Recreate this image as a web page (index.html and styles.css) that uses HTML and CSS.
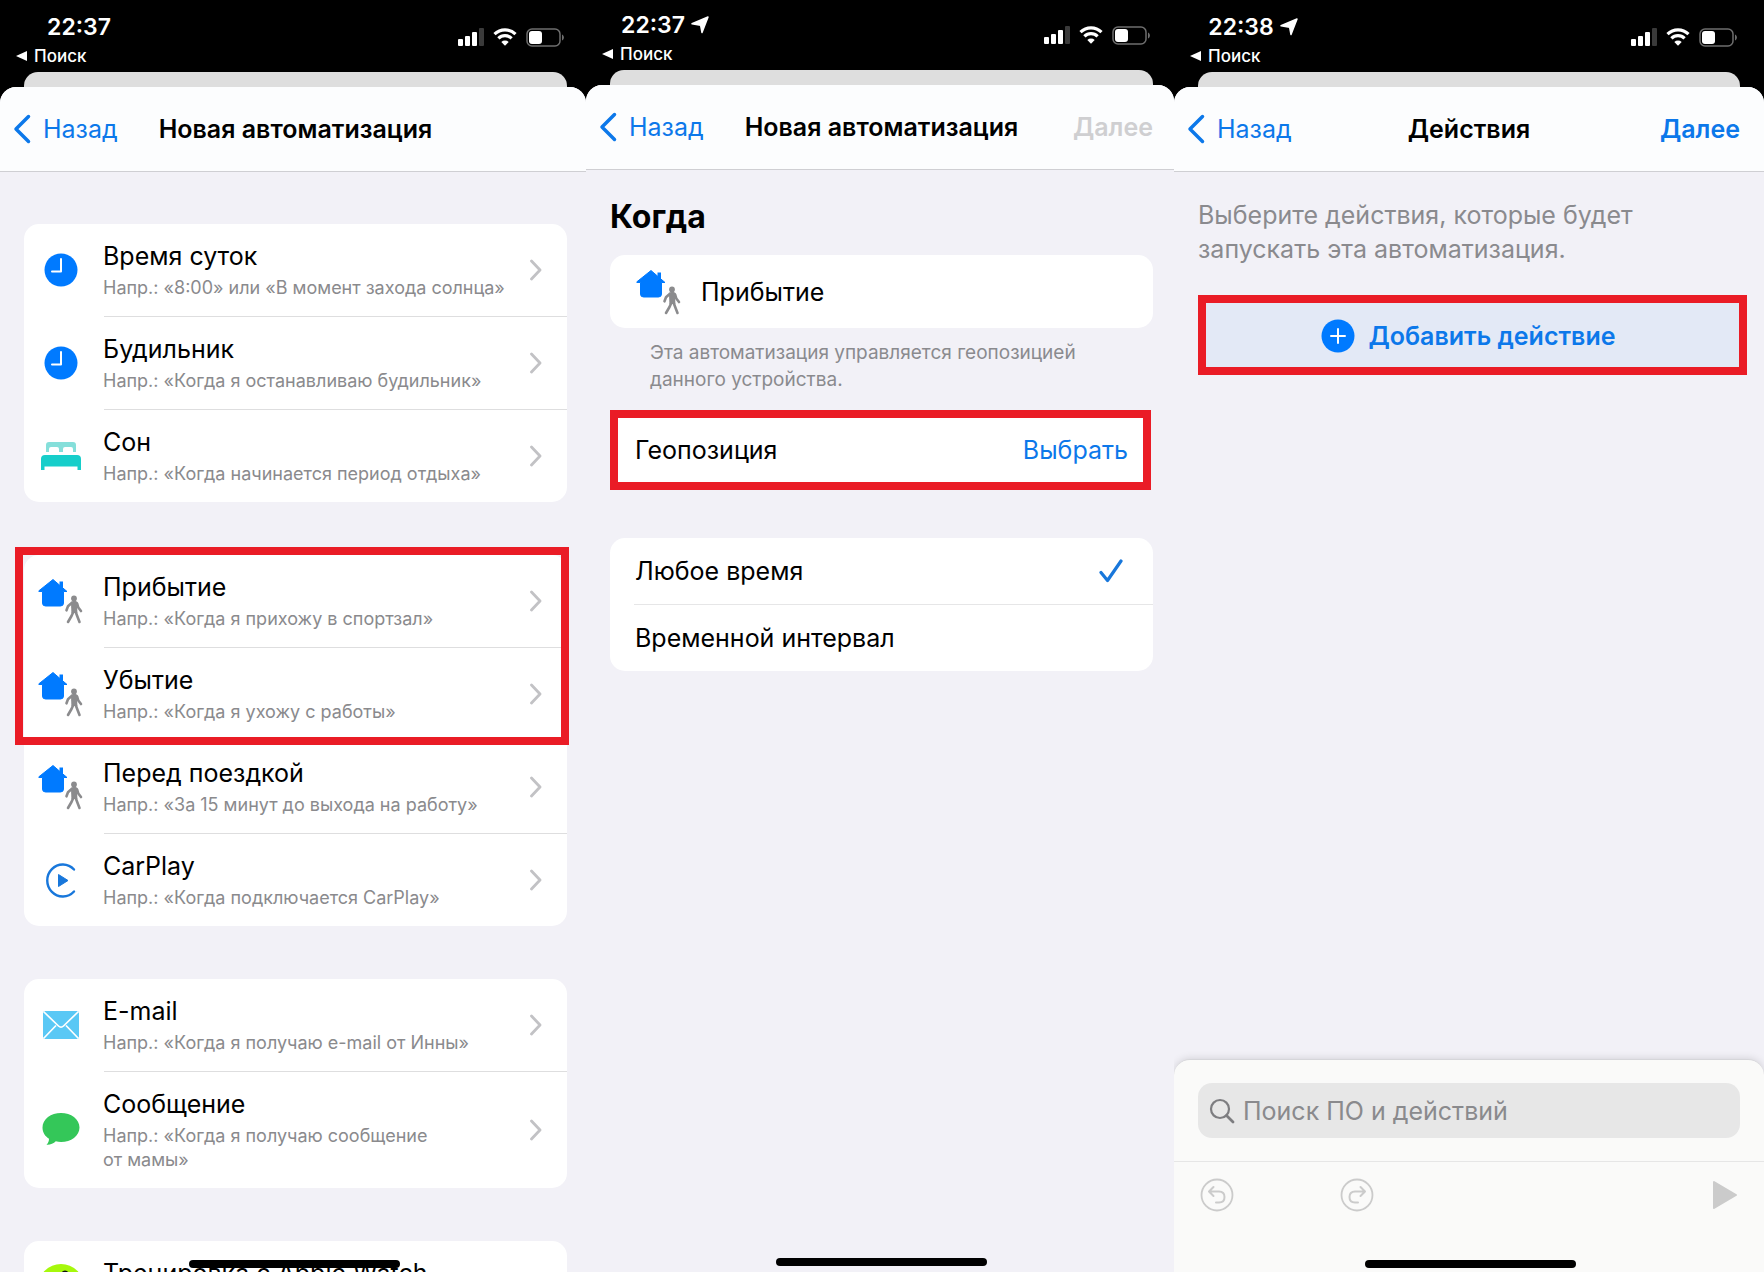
FILE: index.html
```html
<!DOCTYPE html>
<html lang="ru">

<head>
    <meta charset="UTF-8">
    <meta name="viewport" content="width=device-width, initial-scale=1.0">
    <title>Новая автоматизация</title>
    <link rel="stylesheet" href="styles.css">
</head>

<body>
    <svg class="sprite" aria-hidden="true">
        <symbol id="signal" viewBox="0 0 26 18">
            <rect x="0" y="11" width="5" height="7" rx="1" fill="#fff"/>
            <rect x="7" y="8" width="5" height="10" rx="1" fill="#fff"/>
            <rect x="14" y="4" width="5" height="14" rx="1" fill="#fff"/>
            <rect x="21" y="0" width="5" height="18" rx="1" fill="#3a3a3a"/>
        </symbol>
        <symbol id="wifi" viewBox="0 0 24 18">
            <path d="M1.5 6.2a15 15 0 0 1 21 0M5.4 10.3a9.4 9.4 0 0 1 13.2 0" fill="none" stroke="#fff" stroke-width="3.2"/>
            <path d="M12 17.8l-3.7-3.9a5.4 5.4 0 0 1 7.4 0z" fill="#fff"/>
        </symbol>
        <symbol id="battery" viewBox="0 0 38 19">
            <rect x="1" y="1" width="33" height="17" rx="5" fill="none" stroke="#6e6e6e" stroke-width="1.5"/>
            <rect x="3" y="3" width="13" height="13" rx="3" fill="#fff"/>
            <path d="M36 6.5c2.5 1 2.5 5 0 6z" fill="#6e6e6e"/>
        </symbol>
        <symbol id="location" viewBox="0 0 18 18">
            <path d="M17 1L11 16.5 9.6 9.2 1 7.8z" fill="#fff" stroke="#fff" stroke-width="1.5" stroke-linejoin="round"/>
        </symbol>
        <symbol id="back" viewBox="0 0 18 30">
            <path d="M15.5 2.5L3 15l12.5 12.5" fill="none" stroke="currentColor" stroke-width="3.5" stroke-linecap="round" stroke-linejoin="round"/>
        </symbol>
        <symbol id="chevron" viewBox="0 0 12 22">
            <path d="M1.5 2l8.5 9-8.5 9" fill="none" stroke="#c2c2c5" stroke-width="2.8" stroke-linecap="round" stroke-linejoin="round"/>
        </symbol>
        <symbol id="clock" viewBox="0 0 46 46">
            <circle cx="23" cy="23" r="16.5" fill="#007aff"/>
            <path d="M23 12v12.5h-9" fill="none" stroke="#fff" stroke-width="2" stroke-linecap="round" stroke-linejoin="round"/>
        </symbol>
        <symbol id="bed" viewBox="0 0 46 46">
            <path d="M8 19v-7q0-3 3-3h24q3 0 3 3v7h-3v-3q0-2-2-2h-6q-2 0-2 2v3h-4v-3q0-2-2-2h-6q-2 0-2 2v3z" fill="#85dfda"/>
            <path d="M3 37V26q0-4 4-4h32q4 0 4 4v11h-3.500v-3.500h-33V37z" fill="#16ceca"/>
        </symbol>
        <symbol id="house-walk" viewBox="0 0 46 46">
            <path d="M15 1.5L29 13.500h-3.500V25q0 3-3 3H7.500q-3 0-3-3V13.500H1L.6 13z" fill="#007aff" stroke="#007aff" stroke-linejoin="round"/>
            <path d="M21.5 3.5H25v8h-3.500z" fill="#007aff"/>
            <circle cx="36" cy="20.500" r="2.900" fill="#8b8b8d"/>
            <path d="M32.500 26q1-2 3.500-2t3.300 2l1 3.500 2.700 3.500M32.500 26l-2.500 2.300-1.500 4M35.500 33.500L33.500 38l-3.500 6M37.500 33.500l1.500 4 2.500 6.500" fill="none" stroke="#8b8b8d" stroke-width="2.600" stroke-linecap="round" stroke-linejoin="round"/>
            <path d="M33 25h6l.4 10h-6z" fill="#8b8b8d"/>
        </symbol>
        <symbol id="carplay" viewBox="0 0 46 46">
            <path d="M36 12.500A15.500 16 0 1 0 36 34.500" fill="none" stroke="#1877db" stroke-width="2.400" stroke-linecap="round"/>
            <path d="M20.500 17.500L30 23.500 20.500 29.500z" fill="#1877db" stroke="#1877db" stroke-linejoin="round"/>
        </symbol>
        <symbol id="mail" viewBox="0 0 46 46">
            <rect x="5" y="9" width="36" height="28" rx="2" fill="#5ac8f5"/>
            <path d="M5.500 9.500L20.500 24q2.500 2.400 5 0L40.500 9.500M5.500 36.500L18 23.500M40.500 36.500L28 23.500" fill="none" stroke="#fff" stroke-width="1.700"/>
        </symbol>
        <symbol id="bubble" viewBox="0 0 46 46">
            <path d="M23 6C13 6 4.500 12 4.500 20.500c0 5 2.500 8.700 6.500 11.200 0 2.500-.8 4.300-2.500 6 3.500.3 7-1.200 9.300-3.400 1.600.5 3.400.7 5.200.7 10 0 18.500-6 18.500-14.500S33 6 23 6z" fill="#34c759"/>
        </symbol>
        <symbol id="workout" viewBox="0 0 46 46">
            <circle cx="23" cy="23" r="23" fill="#a6f80c"/>
            <circle cx="27" cy="10" r="3.500" fill="#111"/>
            <path d="M14 18l6-4 6 2-3 9 6 4-1 9M26 17l4 5 5-1M22 25l-3 7-7 1" fill="none" stroke="#111" stroke-width="3.500" stroke-linecap="round" stroke-linejoin="round"/>
        </symbol>
        <symbol id="check" viewBox="0 0 24 24">
            <path d="M2 13.500l6.500 8L22 2" fill="none" stroke="#1877db" stroke-width="3.200" stroke-linecap="round" stroke-linejoin="round"/>
        </symbol>
        <symbol id="plus" viewBox="0 0 34 34">
            <circle cx="17" cy="17" r="16.500" fill="#007aff"/>
            <path d="M17 10v14M10 17h14" stroke="#fff" stroke-width="2" stroke-linecap="round"/>
        </symbol>
        <symbol id="search" viewBox="0 0 26 26">
            <circle cx="11" cy="11" r="9" fill="none" stroke="#7d7d80" stroke-width="2.200"/>
            <path d="M17.500 17.500l6.500 6.500" stroke="#7d7d80" stroke-width="2.800" stroke-linecap="round"/>
        </symbol>
        <symbol id="undo" viewBox="0 0 34 34">
            <circle cx="17" cy="17" r="15.500" fill="none" stroke="#cbcbcb" stroke-width="1.800"/>
            <path d="M13.500 9L9 13.500l4.500 4.500M9.500 13.500H19q5.500 0 5.500 5.500T19 24.500h-3" fill="none" stroke="#cbcbcb" stroke-width="2" stroke-linecap="round" stroke-linejoin="round"/>
        </symbol>
        <symbol id="play" viewBox="0 0 26 30">
            <path d="M2 2l22 13L2 28z" fill="#cbcbcb" stroke="#cbcbcb" stroke-width="2" stroke-linejoin="round"/>
        </symbol>
    </svg>

    <main class="phones">
        <section class="phone phone-list">
            <div class="status">
                <div class="status-left">
                    <div class="time">22:37</div>
                    <a class="return" href="#"><span class="triangle"></span>Поиск</a>
                </div>
                <div class="status-icons">
                    <svg width="26" height="18"><use href="#signal"/></svg>
                    <svg width="24" height="18"><use href="#wifi"/></svg>
                    <svg width="38" height="19"><use href="#battery"/></svg>
                </div>
            </div>
            <div class="back-sheet"></div>
            <div class="sheet">
                <header class="nav">
                    <a class="nav-back" href="#"><svg width="18" height="30"><use href="#back"/></svg>Назад</a>
                    <h1>Новая автоматизация</h1>
                </header>
                <div class="groups">
                    <ul class="card">
                        <li><a class="row" href="#">
                            <svg class="icon"><use href="#clock"/></svg>
                            <span class="text"><span class="title">Время суток</span><span class="hint">Напр.: «8:00» или «В момент захода солнца»</span></span>
                            <svg class="chevron"><use href="#chevron"/></svg>
                        </a></li>
                        <li><a class="row" href="#">
                            <svg class="icon"><use href="#clock"/></svg>
                            <span class="text"><span class="title">Будильник</span><span class="hint">Напр.: «Когда я останавливаю будильник»</span></span>
                            <svg class="chevron"><use href="#chevron"/></svg>
                        </a></li>
                        <li><a class="row" href="#">
                            <svg class="icon"><use href="#bed"/></svg>
                            <span class="text"><span class="title">Сон</span><span class="hint">Напр.: «Когда начинается период отдыха»</span></span>
                            <svg class="chevron"><use href="#chevron"/></svg>
                        </a></li>
                    </ul>
                    <ul class="card card-marked">
                        <li><a class="row" href="#">
                            <svg class="icon"><use href="#house-walk"/></svg>
                            <span class="text"><span class="title">Прибытие</span><span class="hint">Напр.: «Когда я прихожу в спортзал»</span></span>
                            <svg class="chevron"><use href="#chevron"/></svg>
                        </a></li>
                        <li><a class="row" href="#">
                            <svg class="icon"><use href="#house-walk"/></svg>
                            <span class="text"><span class="title">Убытие</span><span class="hint">Напр.: «Когда я ухожу с работы»</span></span>
                            <svg class="chevron"><use href="#chevron"/></svg>
                        </a></li>
                        <li><a class="row" href="#">
                            <svg class="icon"><use href="#house-walk"/></svg>
                            <span class="text"><span class="title">Перед поездкой</span><span class="hint">Напр.: «За 15 минут до выхода на работу»</span></span>
                            <svg class="chevron"><use href="#chevron"/></svg>
                        </a></li>
                        <li><a class="row" href="#">
                            <svg class="icon"><use href="#carplay"/></svg>
                            <span class="text"><span class="title">CarPlay</span><span class="hint">Напр.: «Когда подключается CarPlay»</span></span>
                            <svg class="chevron"><use href="#chevron"/></svg>
                        </a></li>
                    </ul>
                    <ul class="card">
                        <li><a class="row" href="#">
                            <svg class="icon"><use href="#mail"/></svg>
                            <span class="text"><span class="title">E-mail</span><span class="hint">Напр.: «Когда я получаю e-mail от Инны»</span></span>
                            <svg class="chevron"><use href="#chevron"/></svg>
                        </a></li>
                        <li><a class="row" href="#">
                            <svg class="icon"><use href="#bubble"/></svg>
                            <span class="text"><span class="title">Сообщение</span><span class="hint">Напр.: «Когда я получаю сообщение<br>от мамы»</span></span>
                            <svg class="chevron"><use href="#chevron"/></svg>
                        </a></li>
                    </ul>
                    <ul class="card">
                        <li><a class="row" href="#">
                            <svg class="icon"><use href="#workout"/></svg>
                            <span class="text"><span class="title">Тренировка с Apple Watch</span></span>
                        </a></li>
                    </ul>
                </div>
            </div>
            <div class="home-bar"></div>
        </section>

        <section class="phone phone-when">
            <div class="status">
                <div class="status-left">
                    <div class="time">22:37<svg width="18" height="18"><use href="#location"/></svg></div>
                    <a class="return" href="#"><span class="triangle"></span>Поиск</a>
                </div>
                <div class="status-icons">
                    <svg width="26" height="18"><use href="#signal"/></svg>
                    <svg width="24" height="18"><use href="#wifi"/></svg>
                    <svg width="38" height="19"><use href="#battery"/></svg>
                </div>
            </div>
            <div class="back-sheet"></div>
            <div class="sheet">
                <header class="nav">
                    <a class="nav-back" href="#"><svg width="18" height="30"><use href="#back"/></svg>Назад</a>
                    <h1>Новая автоматизация</h1>
                    <button class="nav-next" type="button" disabled>Далее</button>
                </header>
                <div class="content">
                    <h2>Когда</h2>
                    <div class="card trigger">
                        <svg class="icon"><use href="#house-walk"/></svg>
                        <span class="title">Прибытие</span>
                    </div>
                    <p class="note">Эта автоматизация управляется геопозицией данного устройства.</p>
                    <div class="place">
                        <span>Геопозиция</span>
                        <button type="button">Выбрать</button>
                    </div>
                    <div class="card options">
                        <label><span>Любое время</span><input type="radio" name="period" checked><svg width="24" height="24"><use href="#check"/></svg></label>
                        <label><span>Временной интервал</span><input type="radio" name="period"><svg width="24" height="24"><use href="#check"/></svg></label>
                    </div>
                </div>
            </div>
            <div class="home-bar"></div>
        </section>

        <section class="phone phone-actions">
            <div class="status">
                <div class="status-left">
                    <div class="time">22:38<svg width="18" height="18"><use href="#location"/></svg></div>
                    <a class="return" href="#"><span class="triangle"></span>Поиск</a>
                </div>
                <div class="status-icons">
                    <svg width="26" height="18"><use href="#signal"/></svg>
                    <svg width="24" height="18"><use href="#wifi"/></svg>
                    <svg width="38" height="19"><use href="#battery"/></svg>
                </div>
            </div>
            <div class="back-sheet"></div>
            <div class="sheet">
                <header class="nav">
                    <a class="nav-back" href="#"><svg width="18" height="30"><use href="#back"/></svg>Назад</a>
                    <h1>Действия</h1>
                    <button class="nav-next" type="button">Далее</button>
                </header>
                <div class="content">
                    <p class="lead">Выберите действия, которые будет<br>запускать эта автоматизация.</p>
                    <button class="add" type="button"><svg width="34" height="34"><use href="#plus"/></svg>Добавить действие</button>
                </div>
                <div class="drawer">
                    <label class="search">
                        <svg width="26" height="26"><use href="#search"/></svg>
                        <input type="search" placeholder="Поиск ПО и действий" aria-label="Поиск ПО и действий">
                    </label>
                    <div class="toolbar">
                        <button type="button" aria-label="Отменить"><svg width="34" height="34"><use href="#undo"/></svg></button>
                        <button type="button" aria-label="Повторить"><svg class="flip" width="34" height="34"><use href="#undo"/></svg></button>
                        <button class="run" type="button" aria-label="Запустить"><svg width="26" height="30"><use href="#play"/></svg></button>
                    </div>
                </div>
            </div>
            <div class="home-bar"></div>
        </section>
    </main>
</body>

</html>
```

FILE: styles.css
```css
*,
*::after {
    box-sizing: border-box;
}

body {
    margin: 0;
    background-color: #000;
    color: #000;
    font-family: Inter, "Liberation Sans", sans-serif;
    font-size: 25px;
}

a {
    color: inherit;
    text-decoration: none;
}

button {
    padding: 0;
    border: none;
    background: none;
    font: inherit;
    cursor: pointer;
}

h1,
h2,
p,
ul {
    margin: 0;
    padding: 0;
}

ul {
    list-style: none;
}

svg {
    display: block;
    flex-shrink: 0;
}

.sprite {
    position: absolute;
    width: 0;
    height: 0;
}

.phones {
    display: grid;
    grid-template-columns: 586fr 588fr 590fr;
    height: 100vh;
    overflow: hidden;
}

.phone {
    --right: 24px;
    position: relative;
    display: flex;
    flex-direction: column;
    min-width: 0;
    min-height: 0;
    overflow: hidden;
}

.phone-list {
    --right: 19px;
}

.phone-when {
    --right: 21px;
}

/* status bar */
.status {
    display: flex;
    justify-content: space-between;
    height: 72px;
    padding: 12px var(--right) 0 16px;
    color: #fff;
}

.phone-when .status {
    height: 70px;
    padding-top: 10px;
}

.status-left {
    width: 126px;
}

.time {
    display: flex;
    justify-content: center;
    align-items: center;
    gap: 6px;
    font-size: 23px;
    font-weight: 600;
    line-height: 30px;
}

.return {
    display: flex;
    align-items: center;
    gap: 7px;
    font-size: 17px;
    font-weight: 500;
    line-height: 28px;
}

.triangle {
    border: 5px solid transparent;
    border-right: 11px solid #fff;
    border-left: none;
}

.status-icons {
    display: flex;
    gap: 9px;
    padding: 16px 3px 0 0;
}

/* sheet */
.back-sheet {
    flex-shrink: 0;
    height: 15px;
    margin: 0 var(--right) 0 24px;
    border-radius: 14px 14px 0 0;
    background-color: #dedede;
}

.sheet {
    display: flex;
    flex: 1;
    flex-direction: column;
    min-height: 0;
    border-radius: 16px 16px 0 0;
    background-color: #f2f1f7;
    overflow: hidden;
}

.nav {
    display: grid;
    grid-template-columns: 1fr auto 1fr;
    align-items: center;
    flex-shrink: 0;
    height: 85px;
    padding: 0 calc(var(--right) - 11px) 0 13px;
    border-bottom: 1px solid #cfcfd3;
    background-color: #fcfdfe;
}

.nav h1 {
    font-size: 25px;
    font-weight: 600;
}

.nav-back {
    display: flex;
    align-items: center;
    gap: 12px;
    color: #0c78ea;
}

.nav-next {
    justify-self: end;
    margin-right: 11px;
    color: #0c78ea;
    font-weight: 600;
}

.nav-next:disabled {
    color: #cfcfd1;
}

/* trigger list */
.groups {
    display: flex;
    flex-direction: column;
    gap: 53px;
    padding: 52px var(--right) 0 24px;
}

.card {
    border-radius: 15px;
    background-color: #fff;
}

.row {
    display: flex;
    align-items: center;
    min-height: 92px;
    padding: 16px 25px 16px 14px;
}

.card li + li {
    padding-top: 1px;
    background: linear-gradient(#dededf, #dededf) 80px 0 / 100% 1px no-repeat;
}

.icon {
    width: 46px;
    height: 46px;
    margin-right: 19px;
}

.text {
    display: flex;
    flex: 1;
    flex-direction: column;
    gap: 4px;
    min-width: 0;
    min-height: 60px;
    white-space: nowrap;
}

.title {
    line-height: 32px;
}

.hint {
    color: #8a8a8d;
    font-size: 18px;
    line-height: 24px;
}

.chevron {
    width: 12px;
    height: 22px;
}

.card-marked {
    position: relative;
}

/* red frame round the first two rows */
.card-marked::after {
    content: "";
    position: absolute;
    top: -8px;
    left: -9px;
    right: -2px;
    height: 198px;
    border: 8px solid #ea1c26;
    pointer-events: none;
}

/* conditions */
.content {
    padding: 26px var(--right) 0 24px;
}

h2 {
    margin: 2px 0 19px;
    font-size: 32px;
    font-weight: 700;
    line-height: 38px;
}

.trigger {
    display: flex;
    align-items: center;
    height: 73px;
    padding-left: 26px;
}

.note {
    margin: 11px 40px 17px;
    color: #8a8a8e;
    font-size: 19px;
    line-height: 27px;
}

.place {
    display: flex;
    justify-content: space-between;
    align-items: center;
    height: 80px;
    margin: 0 2px 48px 0;
    padding: 0 15px 0 17px;
    border: 8px solid #ea1c26;
    background-color: #fff;
}

.place button {
    color: #0c78ea;
}

.options label {
    display: flex;
    justify-content: space-between;
    align-items: center;
    height: 66px;
    padding: 0 30px 0 25px;
}

.options label + label {
    height: 67px;
    background: linear-gradient(#e6e6e7, #e6e6e7) 24px 0 / 100% 1px no-repeat;
}

.options input {
    appearance: none;
    width: 0;
    height: 0;
    margin: 0;
}

.options svg {
    visibility: hidden;
}

.options input:checked + svg {
    visibility: visible;
}

/* actions */
.lead {
    margin-bottom: 29px;
    color: #8a8a8e;
    line-height: 34px;
    white-space: nowrap;
}

.add {
    display: flex;
    justify-content: center;
    align-items: center;
    gap: 13px;
    width: calc(100% + 7px);
    height: 80px;
    padding: 2px 8px 0 0;
    border: 8px solid #ea1c26;
    background-color: #e3e9f6;
    color: #0c78ea;
    font-weight: 600;
}

.drawer {
    height: 213px;
    margin-top: auto;
    border-top: 1px solid #d6d6da;
    border-radius: 16px 16px 0 0;
    background-color: #fafaf9;
    box-shadow: 0 0 8px rgba(0, 0, 0, 0.15);
}

.search {
    display: flex;
    align-items: center;
    gap: 8px;
    height: 55px;
    margin: 23px 24px;
    padding: 0 11px;
    border-radius: 14px;
    background-color: #e7e7e7;
}

.search input {
    flex: 1;
    min-width: 0;
    padding: 0;
    border: none;
    outline: none;
    background: none;
    font: inherit;
}

.search input::placeholder {
    color: #8a8a8d;
    opacity: 1;
}

.toolbar {
    display: flex;
    align-items: center;
    gap: 106px;
    padding: 16px 26px 0;
    border-top: 1px solid #e6e6e6;
}

.run {
    margin-left: auto;
}

.flip {
    transform: scaleX(-1);
}

.home-bar {
    position: absolute;
    bottom: 4px;
    left: 50%;
    width: 211px;
    height: 8px;
    margin-left: -104px;
    border-radius: 4px;
    background-color: #000;
}

.phone-when .home-bar {
    bottom: 6px;
}
```
